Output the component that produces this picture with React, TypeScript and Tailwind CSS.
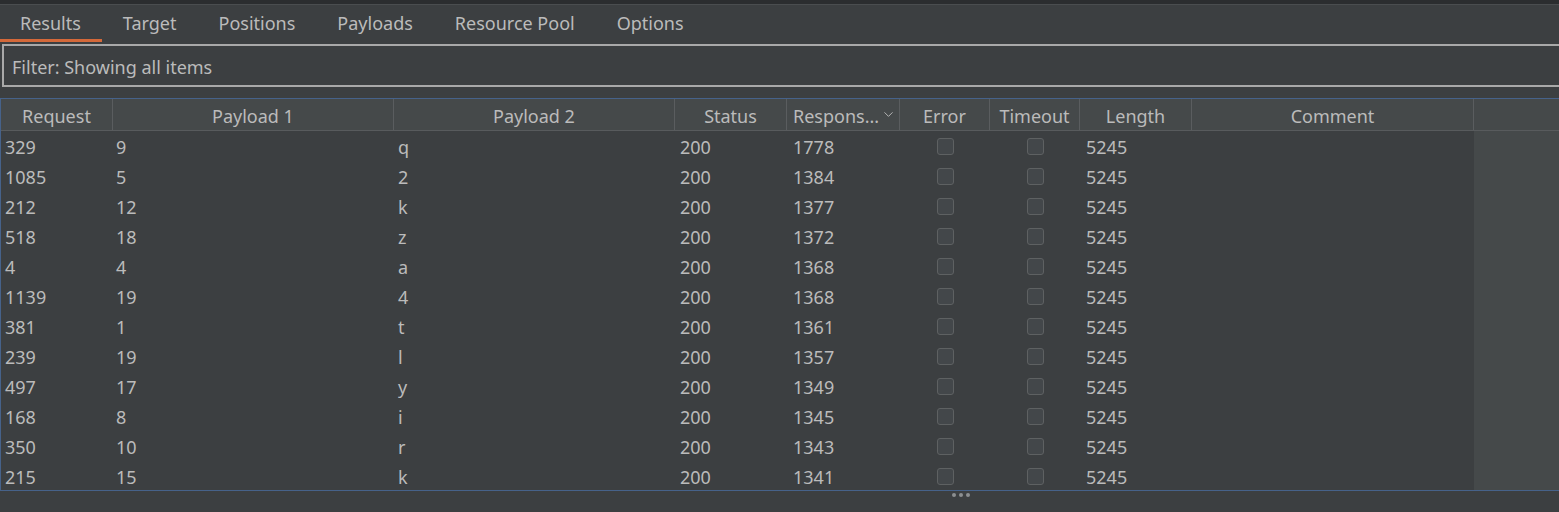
import { ChevronDown } from "lucide-react";

const COLS = [
  { key: "req", label: "Request", w: 112 },
  { key: "p1", label: "Payload 1", w: 281 },
  { key: "p2", label: "Payload 2", w: 281 },
  { key: "status", label: "Status", w: 112 },
  { key: "resp", label: "Respons...", w: 113 },
  { key: "err", label: "Error", w: 90 },
  { key: "to", label: "Timeout", w: 90 },
  { key: "len", label: "Length", w: 112 },
  { key: "comment", label: "Comment", w: 282 },
];

const ROWS = [
  ["329", "9", "q", "1778"],
  ["1085", "5", "2", "1384"],
  ["212", "12", "k", "1377"],
  ["518", "18", "z", "1372"],
  ["4", "4", "a", "1368"],
  ["1139", "19", "4", "1368"],
  ["381", "1", "t", "1361"],
  ["239", "19", "l", "1357"],
  ["497", "17", "y", "1349"],
  ["168", "8", "i", "1345"],
  ["350", "10", "r", "1343"],
  ["215", "15", "k", "1341"],
];

const TABS = ["Results", "Target", "Positions", "Payloads", "Resource Pool", "Options"];

function Box() {
  return <div className="w-[17px] h-[17px] mt-[1px] rounded-[3px] border border-[#5e6162] bg-[#43474a]" />;
}

export default function App() {
  return (
    <div
      className="w-[1559px] h-[512px] bg-[#3c3f41] text-[#bbbbbb] text-[18px] overflow-hidden flex flex-col"
      style={{ fontFamily: '"Noto Sans", "Open Sans", sans-serif' }}
    >
      {/* top strip */}
      <div className="h-[5px] bg-[#2b2d2f] border-b border-[#4a4d4f] shrink-0" />

      {/* tabs */}
      <div className="flex h-[37px] shrink-0">
        {TABS.map((t, i) => (
          <div
            key={t}
            className={`px-[21px] flex items-center leading-none ${
              i === 0 ? "border-b-[3px] border-[#d4693a] pt-[2px] pl-[20px]" : "pb-[1px]"
            }`}
          >
            {t}
          </div>
        ))}
      </div>

      {/* filter */}
      <div className="pl-[2px] mt-[2px] shrink-0">
        <div className="h-[43px] border-2 border-r-0 border-[#a9a9a9] flex items-center pl-[8px] pt-[3px]">
          Filter: Showing all items
        </div>
      </div>

      {/* table */}
      <div className="mt-[11px] border border-[#46628a] border-r-0 h-[393px] flex flex-col shrink-0">
        <div className="flex h-[32px] bg-[#45494a] border-b border-[#585b5d] shrink-0">
          {COLS.map((c) => (
            <div
              key={c.key}
              style={{ width: c.w }}
              className="shrink-0 flex items-center justify-center border-r border-[#5a5d5f] pt-[3px]"
            >
              {c.key === "resp" ? (
                <div className="flex items-center w-full pl-[6px] gap-[2px]">
                  <span>{c.label}</span>
                  <ChevronDown size={15} strokeWidth={1.5} className="text-[#bbbbbb] -mt-1" />
                </div>
              ) : (
                c.label
              )}
            </div>
          ))}
          <div className="flex-1" />
        </div>
        <div className="flex flex-1 min-h-0">
          <div className="flex flex-col">
            {ROWS.map((r, i) => (
              <div key={i} className="flex h-[30px] items-center">
                <div className="w-[112px] pl-[4px] pt-[3px]">{r[0]}</div>
                <div className="w-[281px] pl-[3px] pt-[3px]">{r[1]}</div>
                <div className="w-[281px] pl-[4px] pt-[3px]">{r[2]}</div>
                <div className="w-[112px] pl-[5px] pt-[3px]">200</div>
                <div className="w-[113px] pl-[6px] pt-[3px]">{r[3]}</div>
                <div className="w-[90px] flex justify-center">
                  <Box />
                </div>
                <div className="w-[90px] flex justify-center">
                  <Box />
                </div>
                <div className="w-[112px] pl-[6px] pt-[3px]">5245</div>
                <div className="w-[282px]" />
              </div>
            ))}
          </div>
          <div className="flex-1 bg-[#45494a]" />
        </div>
      </div>

      {/* splitter dots */}
      <div className="flex gap-[3px] pt-[2px] pl-[952px]">
        <div className="w-[4px] h-[4px] rounded-full bg-[#8c8f91]" />
        <div className="w-[4px] h-[4px] rounded-full bg-[#8c8f91]" />
        <div className="w-[4px] h-[4px] rounded-full bg-[#8c8f91]" />
      </div>
    </div>
  );
}
